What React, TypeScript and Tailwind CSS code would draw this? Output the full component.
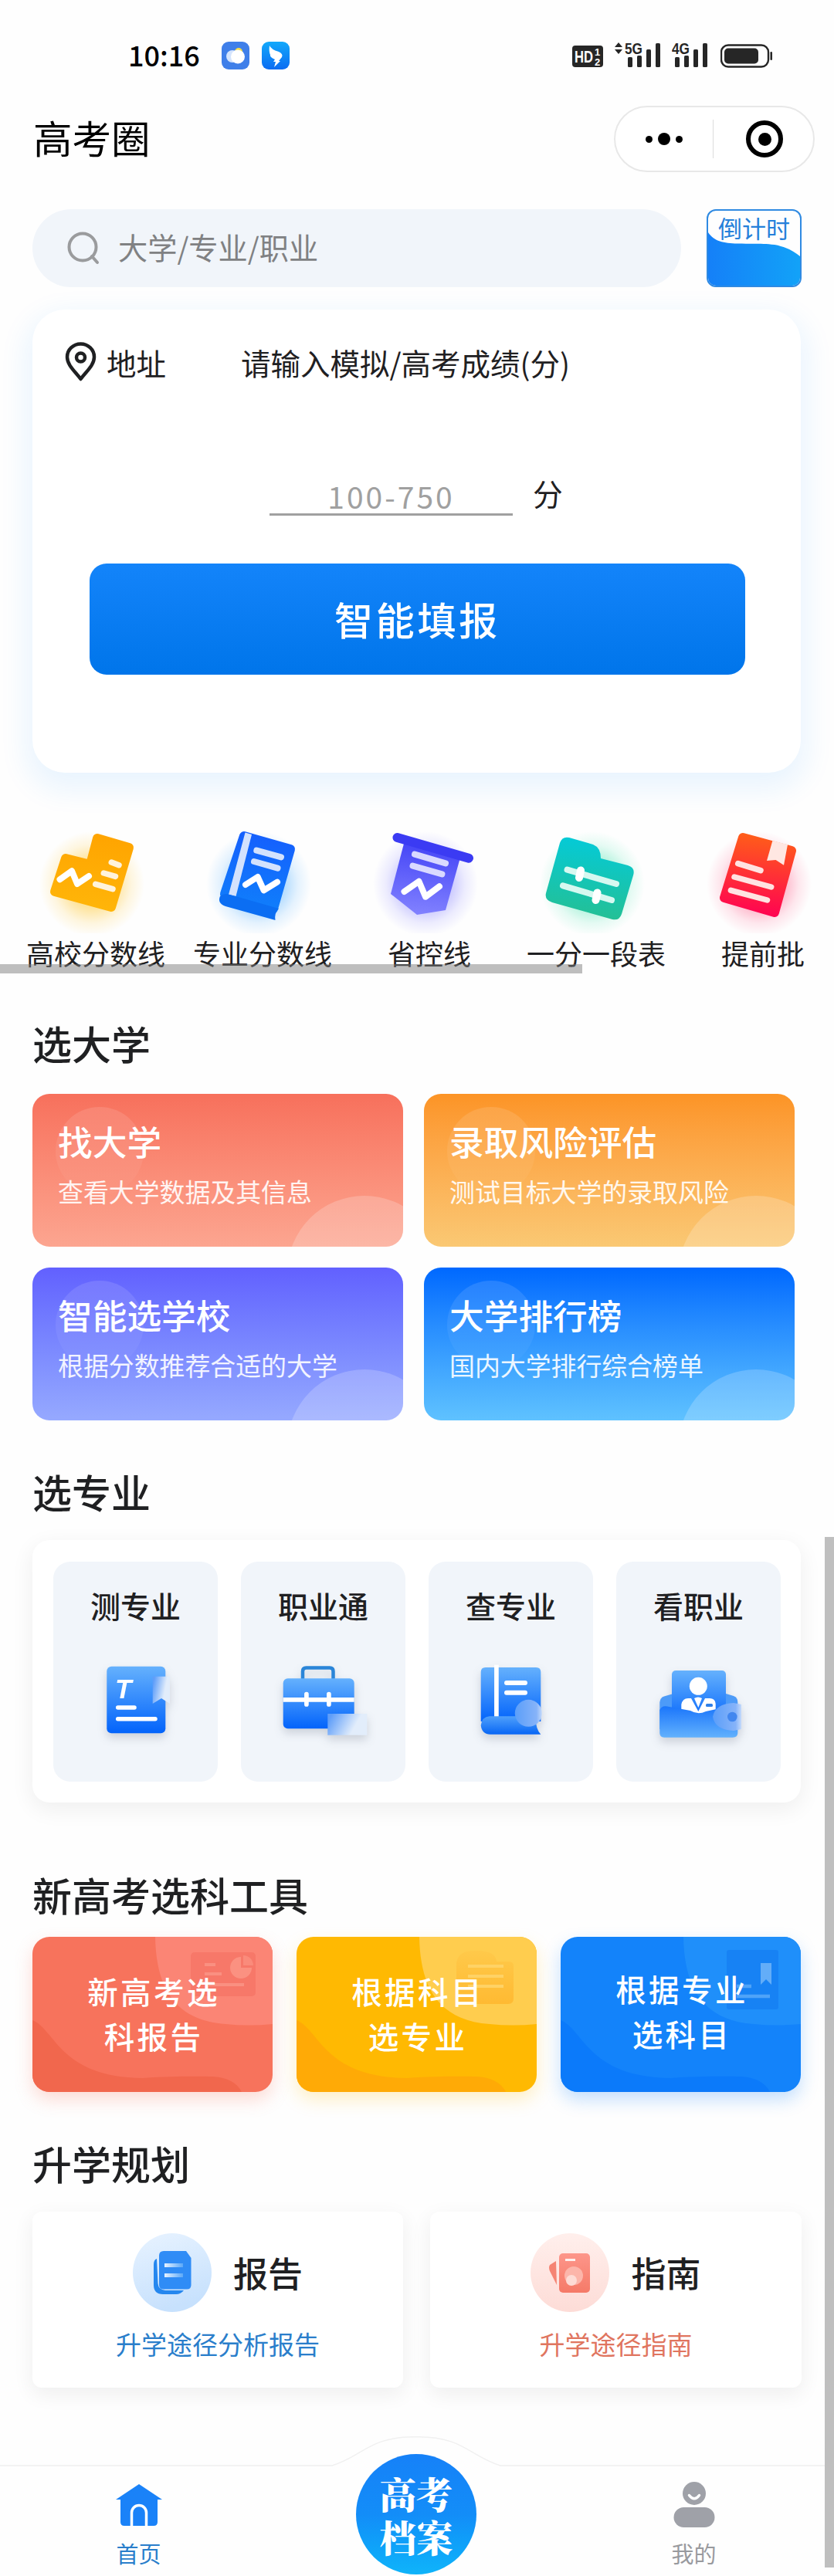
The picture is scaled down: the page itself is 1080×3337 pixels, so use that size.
import { useState } from "react";

function StatusBar() {
  return (
    <div className="flex h-[130px] items-center pt-[14px] pl-[166px] pr-[79px]">
      <span className="relative top-[-2px] text-[36px] leading-none font-medium text-black">10:16</span>
      <svg className="ml-[28px]" width="36" height="36" viewBox="0 0 36 36">
        <rect width="36" height="36" rx="9" fill="#3f7fe9" />
        <circle cx="22" cy="13" r="5" fill="#f4dc4a" />
        <circle cx="14" cy="19" r="8" fill="#d4e4fd" />
        <circle cx="21" cy="19.5" r="9" fill="#fff" />
      </svg>
      <svg className="ml-[16px]" width="36" height="36" viewBox="0 0 36 36">
        <defs>
          <linearGradient id="wing" x1="0" y1="0" x2="0" y2="1">
            <stop offset="0" stopColor="#12a9fb" />
            <stop offset="1" stopColor="#0b6cf2" />
          </linearGradient>
        </defs>
        <rect width="36" height="36" rx="9" fill="url(#wing)" />
        <path d="M10 5 Q12 10 22 13 Q28 16 26 20 L22 25 H24 L16 33 L18 26 H15 L17 23 Q10 20 11 17 Q9 13 10 5Z" fill="#fff" />
      </svg>

      <div className="mb-[4px] ml-auto flex items-end gap-[13px]">
        <svg width="42" height="30" viewBox="0 0 42 30" fontFamily="Liberation Sans" fontWeight="700" fill="#fff">
          <rect x="1" y="1" width="40" height="28" rx="4" fill="#262626" />
          <text x="4" y="23" fontSize="22" textLength="24" lengthAdjust="spacingAndGlyphs">HD</text>
          <text x="30" y="14" fontSize="13">1</text>
          <text x="30" y="27" fontSize="13">2</text>
        </svg>
        <svg width="62" height="35" viewBox="0 0 62 35" fill="#262626">
          <path d="M6 2 L11 8 H1Z M6 17 L11 11 H1Z" />
          <text x="14" y="17" fontSize="21" fontFamily="Liberation Sans" fontWeight="700" textLength="23" lengthAdjust="spacingAndGlyphs">5G</text>
          <rect x="18" y="21" width="6" height="13" rx="1.5" />
          <rect x="30" y="19" width="6" height="15" rx="1.5" />
          <rect x="42" y="11" width="6" height="23" rx="1.5" />
          <rect x="54" y="3" width="6" height="31" rx="1.5" />
        </svg>
        <svg width="50" height="35" viewBox="0 0 50 35" fill="#262626">
          <text x="0" y="17" fontSize="21" fontFamily="Liberation Sans" fontWeight="700" textLength="23" lengthAdjust="spacingAndGlyphs">4G</text>
          <rect x="4" y="21" width="6" height="13" rx="1.5" />
          <rect x="16" y="19" width="6" height="15" rx="1.5" />
          <rect x="28" y="11" width="6" height="23" rx="1.5" />
          <rect x="40" y="3" width="6" height="31" rx="1.5" />
        </svg>
        <svg width="68" height="31" viewBox="0 0 68 31">
          <rect x="1" y="1.5" width="61" height="28" rx="9" fill="none" stroke="#262626" strokeWidth="2.4" />
          <rect x="5" y="5.5" width="44" height="20" rx="5" fill="#262626" />
          <rect x="64.5" y="10" width="2.5" height="11" rx="1.2" fill="#262626" />
        </svg>
      </div>
    </div>
  );
}

function TitleBar() {
  return (
    <div className="flex h-[100px] items-center justify-between pl-[43px] pr-[25px]">
      <h1 className="pb-[6px] text-[50.5px] leading-none text-black">高考圈</h1>
      <div className="flex h-[86px] w-[260px] items-center rounded-full border-2 border-[#e8e8e8] bg-white">
        <div className="flex flex-1 items-center justify-center gap-[7px]">
          <i className="size-[9px] rounded-full bg-black" />
          <i className="size-[16px] rounded-full bg-black" />
          <i className="size-[9px] rounded-full bg-black" />
        </div>
        <div className="h-[50px] w-[1px] bg-[#dcdcdc]" />
        <div className="flex flex-1 items-center justify-center pl-[4px]">
          <div className="flex size-[48px] items-center justify-center rounded-full border-[6px] border-black">
            <i className="size-[17px] rounded-full bg-black" />
          </div>
        </div>
      </div>
    </div>
  );
}

function SearchRow() {
  return (
    <div className="mt-[41px] flex h-[101px] pl-[42px]">
      <div className="flex w-[840px] items-center rounded-full bg-[#f1f5fa] pl-[44px]">
        <svg width="44" height="44" viewBox="0 0 44 44" fill="none" stroke="#9a9b9d" strokeWidth="4">
          <circle cx="21" cy="20" r="17.5" />
          <path d="M33 32 L40 40" strokeLinecap="round" />
        </svg>
        <span className="ml-[23px] pb-[3px] text-[38.2px] leading-none text-[#808183]">大学/专业/职业</span>
      </div>
      <div className="relative ml-[33px] w-[123px] overflow-hidden rounded-[12px] border-2 border-[#2f8ae2]">
        <svg className="absolute inset-0" width="119" height="97" viewBox="0 0 119 97">
          <defs>
            <linearGradient id="cd" x1="0" y1="0" x2="1" y2="0">
              <stop offset="0" stopColor="#1580f8" />
              <stop offset="1" stopColor="#12a2f8" />
            </linearGradient>
          </defs>
          <path d="M0 28 C8 40 20 42 38 42.500 C62 43 70 42 86 44 C102 47 112 53 119 59 V97 H0Z" fill="url(#cd)" />
        </svg>
        <span className="relative block pt-[5px] text-center text-[31px] leading-[34px] text-[#2580da]">倒计时</span>
      </div>
    </div>
  );
}

function ScoreCard() {
  return (
    <div className="mx-[42px] mt-[29px] h-[600px] w-[995px] rounded-[42px] bg-white shadow-[0_14px_36px_8px_rgba(20,140,250,0.09)]">
      <div className="flex items-center pt-[40px] pl-[41px] text-[38.5px] leading-[56px] text-[#1f2022]">
        <svg width="44" height="52" viewBox="0 0 44 52" fill="none" stroke="#1f2022" strokeWidth="4.500">
          <path d="M21.500 48 C14 38 4 30 4 19.500 A17.500 17 0 0 1 39 19.500 C39 30 29 38 21.500 48Z" strokeLinejoin="round" />
          <circle cx="21.500" cy="20" r="5.500" />
        </svg>
        <span className="ml-[11px]">地址</span>
        <span className="ml-[97px]">请输入模拟/高考成绩(分)</span>
      </div>
      <div className="mt-[115px] flex h-[56px] items-end pl-[307px]">
        <div className="h-[51px] w-[315px] border-b-[3px] border-[#a0a0a0] text-center text-[39px] leading-[60px] tracking-[3px] text-[#a0a0a0]">
          <span className="relative top-[-5px]">100-750</span>
        </div>
        <span className="ml-[26px] self-start pt-[6px] text-[38.7px] leading-[40px] text-[#1f2022]">分</span>
      </div>
      <button className="mt-[62px] ml-[74px] block h-[144px] w-[849px] rounded-[22px] bg-gradient-to-b from-[#1384fa] to-[#0075ea] pb-[2px] text-[50px] font-medium tracking-[3.8px] text-white">
        智能填报
      </button>
    </div>
  );
}

const navItems = [
  {
    label: "高校分数线",
    glow: "#ffc93a",
    icon: (
      <>
        <path d="M69 51 L101 59 L110 25 L151 37 L128 114 L55 94Z" fill="url(#nav-yellow)" stroke="url(#nav-yellow)" strokeWidth="12" strokeLinejoin="round" />
        <path d="M61.500 78.300 L77 67.300 L84 84 L99 74" stroke="#fff" strokeWidth="8" />
        <path d="M128.300 56 L138 59.700 M118.300 70 L133.500 74.300 M107.700 84.300 L130 90.700" stroke="#fff3dc" strokeWidth="7.500" />
      </>
    ),
  },
  {
    label: "专业分数线",
    glow: "#5db4ff",
    icon: (
      <>
        <path d="M84 22 L144 39 L122 116 L59 97Z" fill="url(#nav-blue)" stroke="url(#nav-blue)" strokeWidth="12" strokeLinejoin="round" />
        <path d="M85.500 17.500 L94 20 L73.500 100 L64 98Z" fill="#d3e2fd" />
        <path d="M53 100 Q58 95 66 98 L129 116 Q123 122 124.500 131 L60 113 Q49 109 53 100Z" fill="#0b6ef3" />
        <path d="M100.300 40.700 L132 49.300 M97 55 L127.500 63.700" stroke="#d3e2fd" strokeWidth="8" />
        <path d="M86 85 L101.700 75 L109.600 92.300 L127 81.700" stroke="#fff" strokeWidth="8" />
      </>
    ),
  },
  {
    label: "省控线",
    glow: "#8f8bff",
    icon: (
      <>
        <path d="M76 28 L148 50 L129 118 L92 124 L58 97Z" fill="url(#nav-violet)" />
        <path d="M66.500 24 L159 50.700" stroke="#3b3bf3" strokeWidth="12" />
        <path d="M89 45.700 L129 57.300 M86.500 60.700 L124.400 71.300" stroke="#d9d9ff" strokeWidth="8" />
        <path d="M75.500 94 L94.500 80.700 L103 100.700 L121 87.300" stroke="#fff" strokeWidth="8" />
      </>
    ),
  },
  {
    label: "一分一段表",
    glow: "#5de6b8",
    icon: (
      <>
        <path d="M73 24 L104 33 Q114 37 114 51 L149 60 Q159 63 156 73 L141 123 Q138 132 129 130 L51 108 Q41 105 43 96 L61 31 Q64 22 73 24Z" fill="url(#nav-teal)" />
        <path d="M70.600 65.700 L134 84 M65 86.300 L128 105" stroke="#d6f8f0" strokeWidth="8" />
        <path d="M88 66.500 L86 76 M109.500 95.500 L107.500 105" stroke="#fff" strokeWidth="10" />
      </>
    ),
  },
  {
    label: "提前批",
    glow: "#ff6b94",
    icon: (
      <>
        <path d="M82 24 L145 41 L123 121 L58 102Z" fill="url(#nav-red)" stroke="url(#nav-red)" strokeWidth="12" strokeLinejoin="round" />
        <path d="M120.400 28 L140 33 L135 59.700 L124.600 53 L113 54Z" fill="#ffe7e2" />
        <path d="M75.700 57.700 L105 66.700 M71 75 L118.700 88 M66.400 92.300 L113.500 105" stroke="#ffe3e2" strokeWidth="7.500" />
      </>
    ),
  },
];

const navGradients = [
  { id: "nav-yellow", from: "#ffa400", to: "#ffb70a" },
  { id: "nav-blue", from: "#155ffd", to: "#0f82fb" },
  { id: "nav-violet", from: "#3c3cf5", to: "#8484ff" },
  { id: "nav-teal", from: "#02cbdc", to: "#24c095" },
  { id: "nav-red", from: "#ff5f18", to: "#ff0054" },
];

function NavScroller() {
  return (
    <div className="relative h-[260px] overflow-hidden pl-[16px]">
      <svg className="absolute" width="0" height="0">
        <defs>
          {navGradients.map((g) => (
            <linearGradient key={g.id} id={g.id} gradientUnits="userSpaceOnUse" x1="105" y1="18" x2="95" y2="128">
              <stop offset="0" stopColor={g.from} />
              <stop offset="1" stopColor={g.to} />
            </linearGradient>
          ))}
        </defs>
      </svg>
      <div className="flex w-[1080px] pt-[60px]">
        {navItems.map((item, i) => (
          <div key={item.label} className="flex w-[216px] shrink-0 flex-col items-center">
            <svg width="216" height="148" viewBox="0 0 216 148" fill="none" strokeLinecap="round" strokeLinejoin="round">
              <defs>
                <radialGradient id={`glow-${i}`}>
                  <stop offset="0.45" stopColor={item.glow} stopOpacity="0.5" />
                  <stop offset="0.75" stopColor={item.glow} stopOpacity="0.16" />
                  <stop offset="1" stopColor={item.glow} stopOpacity="0" />
                </radialGradient>
              </defs>
              <circle cx="103" cy="84" r="68" fill={`url(#glow-${i})`} />
              {item.icon}
            </svg>
            <span className="text-[36px] leading-[50px] text-[#1f2022]">{item.label}</span>
          </div>
        ))}
      </div>
      {/* scroll thumb overlays the labels */}
      <div className="absolute bottom-0 left-0 h-[12px] w-[754px] bg-[#7d7d7d]/50" />
    </div>
  );
}

function Heading({ children }: { children: string }) {
  return <h2 className="relative top-[-3px] pl-[42px] text-[51px] leading-[60px] font-medium text-[#1f2022]">{children}</h2>;
}

const universityCards = [
  { title: "找大学", desc: "查看大学数据及其信息", bg: "from-[#f7705c] to-[#fca590]" },
  { title: "录取风险评估", desc: "测试目标大学的录取风险", bg: "from-[#fc9425] to-[#fac873]" },
  { title: "智能选学校", desc: "根据分数推荐合适的大学", bg: "from-[#6260ff] to-[#96a9ff]" },
  { title: "大学排行榜", desc: "国内大学排行综合榜单", bg: "from-[#0068ff] to-[#5fc2ff]" },
];

function UniversityGrid() {
  return (
    <div className="mt-[33px] ml-[42px] grid w-[987px] grid-cols-2 gap-[27px]">
      {universityCards.map((card) => (
        <div key={card.title} className={`relative h-[198px] overflow-hidden rounded-[22px] bg-gradient-to-b text-white ${card.bg}`}>
          <div className="absolute top-[17px] left-[30px] size-[114px] rounded-full bg-gradient-to-b from-white/12 to-white/2" />
          <div className="absolute top-[132px] left-[330px] size-[200px] rounded-full bg-white/20" />
          <p className="relative pt-[33px] pl-[33px] text-[44.700px] leading-[56px] font-medium">{card.title}</p>
          <p className="relative pt-[13px] pl-[33px] text-[32.900px] leading-[48px] text-white/90">{card.desc}</p>
        </div>
      ))}
    </div>
  );
}

const majorTiles = [
  {
    label: "测专业",
    icon: (
      <>
        <rect x="69.300" y="18.700" width="76" height="86.500" rx="6" fill="url(#tile-blue)" />
        <text x="80" y="60" fontSize="35" fontFamily="Liberation Sans" fontWeight="700" fontStyle="italic" fill="#fff">T</text>
        <path d="M83.700 72 H105 M83.700 86.700 H132" stroke="#fff" strokeWidth="5.500" strokeLinecap="round" />
        <path d="M128.700 31.700 H151 V67 L140 60 L128.700 67Z" fill="url(#frost)" />
      </>
    ),
  },
  {
    label: "职业通",
    icon: (
      <>
        <path d="M80 36 V25 Q80 20.500 84.500 20.500 H115 Q119.500 20.500 119.500 25 V36" fill="none" stroke="#2a85d8" strokeWidth="4.500" />
        <rect x="54.700" y="34.300" width="92" height="65" rx="6" fill="url(#tile-blue)" />
        <path d="M54.700 61.800 H146.700" stroke="#fff" strokeWidth="5.700" />
        <path d="M84.900 54.500 V68 M113.900 54.500 V68" stroke="#fff" strokeWidth="5.700" strokeLinecap="round" />
        <rect x="112.300" y="80" width="51" height="27.700" fill="url(#frost)" />
      </>
    ),
  },
  {
    label: "查专业",
    icon: (
      <>
        <path d="M73.700 20 H139.300 Q145.300 20 145.300 26 V90 H67.700 V26 Q67.700 20 73.700 20Z" fill="url(#tile-blue)" />
        <path d="M87.900 16.700 V84" stroke="#fff" strokeWidth="5.700" />
        <path d="M101 40 H125 M101 52.700 H125" stroke="#fff" strokeWidth="6" strokeLinecap="round" />
        <path d="M67.700 84 V95 Q69 106.700 80 106.700 H145.300 Q139 101 138 83.300 H79 Q69 84 67.700 95Z" fill="url(#tile-roll)" />
        <circle cx="129.300" cy="79.300" r="17.500" fill="url(#frost-blue)" />
      </>
    ),
  },
  {
    label: "看职业",
    icon: (
      <>
        <path d="M56.300 65 Q57 59 62 57.500 L74 54 H142 L152 57 Q157.300 59 157.300 65 V100 H56.300Z" fill="#4d9bf8" />
        <rect x="72" y="24" width="70" height="70" rx="5" fill="url(#tile-blue)" />
        <circle cx="106.300" cy="44.300" r="11.500" fill="#fff" />
        <path d="M84.300 82 V68 Q86 60 93 60 H97 L106.300 77 L115 60 H121 Q128 60 128.700 67 V82Z" fill="#fff" />
        <path d="M101 60 Q106 57 111 60 L106.300 72Z" fill="#fff" />
        <rect x="116" y="67" width="9" height="4" rx="1.500" fill="#2f80e8" />
        <path d="M56.300 75 Q59 69 66 70.500 L96 76 Q106 82 116 77 L157.300 68 V105 Q157.300 110.700 151 110.700 H62 Q56.300 110.700 56.300 105Z" fill="url(#tile-wallet)" />
        <path d="M125 84 Q128 67 152 66 L162 68 V100 L152 102 Q128 101 125 84Z" fill="url(#frost-blue)" />
        <circle cx="150.300" cy="84" r="6.300" fill="#4287ef" />
      </>
    ),
  },
];

function MajorPanel() {
  return (
    <div className="mt-[30px] ml-[42px] h-[340px] w-[995px] rounded-[22px] bg-white pt-[28px] pl-[27px] shadow-[0_8px_28px_2px_rgba(0,0,0,0.06)]">
      <svg className="absolute" width="0" height="0">
        <defs>
          <linearGradient id="tile-blue" x1="0" y1="0" x2="0" y2="1">
            <stop offset="0" stopColor="#65b1fd" />
            <stop offset="1" stopColor="#0263fb" />
          </linearGradient>
          <linearGradient id="tile-roll" x1="0" y1="0" x2="0" y2="1">
            <stop offset="0" stopColor="#4fa0fb" />
            <stop offset="1" stopColor="#0866f5" />
          </linearGradient>
          <linearGradient id="tile-wallet" x1="0" y1="0" x2="0" y2="1">
            <stop offset="0" stopColor="#1672fb" />
            <stop offset="1" stopColor="#62b1fd" />
          </linearGradient>
          <linearGradient id="frost" x1="0" y1="0" x2="1" y2="0.3">
            <stop offset="0.1" stopColor="#5f9ef9" />
            <stop offset="0.8" stopColor="#e2edfb" />
          </linearGradient>
          <linearGradient id="frost-blue" x1="0" y1="0" x2="1" y2="0">
            <stop offset="0" stopColor="#5b9ef9" />
            <stop offset="0.8" stopColor="#86b3f9" />
            <stop offset="1" stopColor="#c4dafb" />
          </linearGradient>
        </defs>
      </svg>
      <div className="flex gap-[30px]">
        {majorTiles.map((tile) => (
          <div key={tile.label} className="flex h-[285px] w-[213px] flex-col items-center rounded-[22px] bg-[#f1f5fa]">
            <span className="mt-[28px] text-[39px] leading-[56px] font-medium text-[#1f2022]">{tile.label}</span>
            <svg className="mt-[33px] drop-shadow-[0_6px_6px_rgba(40,50,80,0.18)]" width="213" height="130" viewBox="0 0 213 130">
              {tile.icon}
            </svg>
          </div>
        ))}
      </div>
    </div>
  );
}

const toolCards = [
  {
    lines: ["新高考选", "科报告"],
    base: "#f7735c",
    light: "#fb8575",
    dark: "#f1674d",
    pad: "pt-[41px]",
    shadow: "shadow-[0_10px_22px_rgba(247,115,92,0.25)]",
    icon: (
      <>
        <rect x="205" y="20" width="84" height="57" rx="5" fill="#f1695a" opacity="0.45" />
        <path d="M223 36 H237 M223 48 H245 M228 62 H274" stroke="#fb9787" strokeWidth="4" opacity="0.8" />
        <path d="M270 26 A14 14 0 1 0 284 40 H270Z" fill="#fb9787" opacity="0.8" />
        <path d="M273 24 V37 H286 A13 13 0 0 0 273 24Z" fill="#fb9787" opacity="0.6" />
      </>
    ),
  },
  {
    lines: ["根据科目", "选专业"],
    base: "#ffb902",
    light: "#ffcd4e",
    dark: "#ffaa06",
    pad: "pt-[41px]",
    shadow: "shadow-[0_10px_22px_rgba(255,195,30,0.25)]",
    icon: (
      <>
        <path d="M207 34 Q209 18 230 18 Q258 17 259 32 H275 Q281 32 281 38 V80 Q281 87 274 87 H214 Q207 87 207 80Z" fill="url(#tool-amber)" />
        <path d="M222 38 H268 M222 51 H268 M222 64 H268" stroke="#ffd265" strokeWidth="4" />
      </>
    ),
  },
  {
    lines: ["根据专业", "选科目"],
    base: "#1383fa",
    light: "#1f8ffa",
    dark: "#0b7afa",
    pad: "pt-[38px]",
    shadow: "shadow-[0_10px_22px_rgba(19,131,250,0.25)]",
    icon: (
      <>
        <rect x="215" y="17" width="67" height="77" rx="3" fill="#1279f0" opacity="0.6" />
        <path d="M259 34 H273 V62 L266 55 L259 62Z" fill="#63adf8" />
        <path d="M228 64 H247 M228 77 H271" stroke="#4fa3f8" strokeWidth="4.500" />
      </>
    ),
  },
];

function ToolCards() {
  return (
    <div className="mt-[22px] ml-[42px] flex gap-[31px]">
      {toolCards.map((card) => (
        <div key={card.base} className={`relative h-[201px] w-[311px] overflow-hidden rounded-[22px] ${card.shadow}`}>
          <svg className="absolute inset-0" width="311" height="201" viewBox="0 0 311 201">
            <defs>
              <linearGradient id="tool-amber" x1="0" y1="0" x2="0" y2="1">
                <stop offset="0" stopColor="#ffc94a" />
                <stop offset="1" stopColor="#ffba32" />
              </linearGradient>
            </defs>
            <rect width="311" height="201" fill={card.base} />
            <path d="M159 0 C160 60 180 108 250 113 Q280 116 311 113 V0Z" fill={card.light} />
            <path d="M0 108 C30 120 35 182 143 183 C190 180 215 181 234 181 Q262 183 271 201 H0Z" fill={card.dark} />
            {card.icon}
          </svg>
          <p className={`relative pl-[3px] text-center text-[39.500px] leading-[58px] font-medium tracking-[3.400px] text-white ${card.pad}`}>
            {card.lines[0]}
            <br />
            {card.lines[1]}
          </p>
        </div>
      ))}
    </div>
  );
}

function PlanCards() {
  return (
    <div className="mt-[30px] ml-[42px] flex gap-[35px]">
      <div className="flex h-[228px] w-[480px] flex-col items-center rounded-[12px] bg-white pt-[28px] shadow-[0_8px_26px_2px_rgba(0,0,0,0.06)]">
        <div className="flex items-center">
          <svg width="102" height="102" viewBox="0 0 102 102">
            <defs>
              <linearGradient id="plan-a" x1="0" y1="0" x2="0.300" y2="1">
                <stop offset="0" stopColor="#e8f3ff" />
                <stop offset="1" stopColor="#c7e1fd" />
              </linearGradient>
              <linearGradient id="plan-a-line" x1="0" y1="0" x2="1" y2="0">
                <stop offset="0" stopColor="#e8f3ff" />
                <stop offset="1" stopColor="#5ba8f8" />
              </linearGradient>
            </defs>
            <circle cx="51" cy="51" r="51" fill="url(#plan-a)" />
            <path d="M31 33 Q27 34 27 41 V67 Q27 79 39 79 H56 Q62 79 66 74 H42 Q33 73 32.500 65Z" fill="#2587ef" />
            <path d="M40 23 H69 L75.500 32 V67 Q75.500 72.500 70 72.500 H40 Q34 72.500 34 67 V29 Q34 23 40 23Z" fill="#2f8cf6" />
            <rect x="41" y="39" width="24" height="5" fill="url(#plan-a-line)" />
            <rect x="41" y="52" width="24" height="5" fill="url(#plan-a-line)" />
          </svg>
          <span className="ml-[28px] text-[45px] leading-[60px] font-medium text-[#1f2022]">报告</span>
        </div>
        <span className="mt-[16px] text-[33px] leading-[50px] text-[#2a7ecb]">升学途径分析报告</span>
      </div>
      <div className="flex h-[228px] w-[481px] flex-col items-center rounded-[12px] bg-white pt-[28px] shadow-[0_8px_26px_2px_rgba(0,0,0,0.06)]">
        <div className="flex items-center">
          <svg width="102" height="102" viewBox="0 0 102 102">
            <defs>
              <linearGradient id="plan-b" x1="0" y1="0" x2="0" y2="1">
                <stop offset="0" stopColor="#ffefec" />
                <stop offset="1" stopColor="#fddcd7" />
              </linearGradient>
              <linearGradient id="plan-b-doc" x1="0" y1="0" x2="0" y2="1">
                <stop offset="0" stopColor="#fd968a" />
                <stop offset="1" stopColor="#f57a68" />
              </linearGradient>
            </defs>
            <circle cx="51" cy="51" r="51" fill="url(#plan-b)" />
            <path d="M33 36 L25 41 Q23 44 25 49 L34 67Z" fill="#f58473" />
            <rect x="37" y="26" width="40" height="51" rx="5" fill="url(#plan-b-doc)" />
            <path d="M45 34.500 H58" stroke="#fff0ed" strokeWidth="3" />
            <circle cx="56" cy="55" r="12" fill="#fcb5aa" />
            <circle cx="53" cy="61" r="7" fill="#fddbd5" />
          </svg>
          <span className="ml-[28px] text-[45px] leading-[60px] font-medium text-[#1f2022]">指南</span>
        </div>
        <span className="mt-[16px] text-[33px] leading-[50px] text-[#e0755f]">升学途径指南</span>
      </div>
    </div>
  );
}

function TabBar({ active, onChange }: { active: string; onChange: (tab: string) => void }) {
  return (
    <div className="relative mt-[63px] h-[181px]">
      <svg className="absolute inset-0" width="1080" height="181" viewBox="0 0 1080 181">
        <path d="M0 38 H430 C470 26 478 0 539 0.800 C600 0 608 26 648 38 H1080" fill="none" stroke="#f0f0f0" strokeWidth="1.500" />
      </svg>
      <div className="relative flex justify-between pr-[2px]">
        <button
          onClick={() => onChange("home")}
          className={`flex w-[359px] flex-col items-center pt-[60px] text-[29px] leading-[40px] ${active === "home" ? "text-[#2a7ecb]" : "text-[#999a9e]"}`}
        >
          <svg width="62" height="58" viewBox="0 0 62 58" fill="#1a82f8">
            <path d="M31 2 L61 22 H55 V51 Q55 56 50 56 H12 Q7 56 7 51 V22 H1Z" />
            <path d="M21.500 56 V39 A9.500 9.500 0 0 1 40.500 39 V56" fill="none" stroke="#fff" strokeWidth="3.500" />
          </svg>
          <span className="mt-[13px]">首页</span>
        </button>
        <button
          onClick={() => onChange("file")}
          className="mt-[23px] h-[156px] w-[156px] rounded-full bg-gradient-to-b from-[#1681f8] via-[#138df8] to-[#10b4fa] pt-[1px] font-['Noto_Serif_CJK_SC','Noto_Sans_CJK_SC',sans-serif] text-[47.500px] leading-[56px] font-black text-white"
        >
          高考
          <br />
          档案
        </button>
        <button
          onClick={() => onChange("mine")}
          className={`flex w-[359px] flex-col items-center pt-[59px] text-[29px] leading-[40px] ${active === "mine" ? "text-[#2a7ecb]" : "text-[#999a9e]"}`}
        >
          <svg width="54" height="60" viewBox="0 0 54 60" fill="#9fa1a8">
            <circle cx="27" cy="15" r="15" />
            <path d="M20.500 17.500 Q27 26 33.500 17.500" fill="none" stroke="#fff" strokeWidth="3.500" strokeLinecap="round" />
            <rect x="0.500" y="33" width="53" height="26" rx="13" />
          </svg>
          <span className="mt-[12px]">我的</span>
        </button>
      </div>
    </div>
  );
}

export default function App() {
  const [tab, setTab] = useState("home");

  return (
    <div className="relative h-[3337px] w-[1080px] overflow-hidden bg-[#fefefe] font-['Noto_Sans_CJK_SC',sans-serif]">
      <StatusBar />
      <TitleBar />
      <SearchRow />
      <ScoreCard />
      <NavScroller />

      <div className="mt-[63px]">
        <Heading>选大学</Heading>
        <UniversityGrid />
      </div>

      <div className="mt-[65px]">
        <Heading>选专业</Heading>
        <MajorPanel />
      </div>

      <div className="mt-[92px]">
        <Heading>新高考选科工具</Heading>
        <ToolCards />
      </div>

      <div className="mt-[65px]">
        <Heading>升学规划</Heading>
        <PlanCards />
      </div>

      <TabBar active={tab} onChange={setTab} />

      {/* page scroll thumb */}
      <div className="absolute top-[1991px] right-0 h-[1335px] w-[12px] bg-[#bfbfbf]" />
    </div>
  );
}
